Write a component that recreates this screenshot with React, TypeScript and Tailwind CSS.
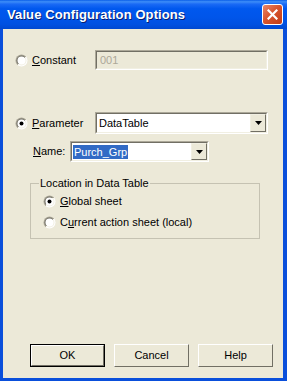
import React from "react";

const Radio = ({ checked }: { checked?: boolean }) => (
  <svg width="13" height="13" viewBox="0 0 13 13" className="shrink-0">
    <defs>
      <linearGradient id="rg" x1="0" y1="0" x2="1" y2="1">
        <stop offset="0" stopColor="#ACA899" />
        <stop offset="0.5" stopColor="#ACA899" />
        <stop offset="0.5" stopColor="#FFFFFF" />
        <stop offset="1" stopColor="#FFFFFF" />
      </linearGradient>
      <linearGradient id="rg2" x1="0" y1="0" x2="1" y2="1">
        <stop offset="0" stopColor="#716F64" />
        <stop offset="0.5" stopColor="#716F64" />
        <stop offset="0.5" stopColor="#F1EFE2" />
        <stop offset="1" stopColor="#F1EFE2" />
      </linearGradient>
    </defs>
    <circle cx="6.5" cy="6.5" r="6" fill="url(#rg)" />
    <circle cx="6.5" cy="6.5" r="5" fill="url(#rg2)" />
    <circle cx="6.5" cy="6.5" r="4" fill="#FFFFFF" />
    {checked && <circle cx="6.5" cy="6.5" r="2" fill="#000000" />}
  </svg>
);

const Sunken = ({ className, children, inner }: { className: string; children?: React.ReactNode; inner: string }) => (
  <div className={`border border-t-[#ACA899] border-l-[#ACA899] border-b-white border-r-white ${className}`}>
    <div className={`h-full border border-t-[#716F64] border-l-[#716F64] border-b-[#F1EFE2] border-r-[#F1EFE2] flex items-center ${inner}`}>
      {children}
    </div>
  </div>
);

const DropBtn = () => (
  <div className="w-[16px] h-full bg-[#ECE9D8] border border-t-[#F1EFE2] border-l-[#F1EFE2] border-b-[#716F64] border-r-[#716F64] flex items-center justify-center shrink-0">
    <svg width="7" height="4" viewBox="0 0 7 4">
      <path d="M0 0H7L3.5 4Z" fill="#000" />
    </svg>
  </div>
);

const Button = ({ label, def }: { label: string; def?: boolean }) => (
  <div className={`w-[75px] h-[23px] ${def ? "border border-black" : ""}`}>
    <div className="h-full border border-t-white border-l-white border-b-[#716F64] border-r-[#716F64] bg-[#ECE9D8] flex items-center justify-center text-black">
      {label}
    </div>
  </div>
);

export default function App() {
  return (
    <div
      className="w-[287px] h-[381px] flex flex-col text-[11px] text-black select-none"
      style={{ fontFamily: '"Liberation Sans", Arial, sans-serif' }}
    >
      <div
        className="h-[29px] flex items-center justify-between pl-[7px] pr-[4px] shrink-0"
        style={{
          background:
            "linear-gradient(to bottom, #0A5EE8 0%, #3D8DF8 6%, #1A6AF5 14%, #0058EE 30%, #0055EA 60%, #0050E0 85%, #0048D0 100%)",
        }}
      >
        <span className="text-white font-bold text-[13px] tracking-[0.1px]" style={{ textShadow: "1px 1px 0 #0A1E6E" }}>
          Value Configuration Options
        </span>
        <div
          className="w-[21px] h-[21px] rounded-[3px] border border-white flex items-center justify-center"
          style={{ background: "linear-gradient(135deg, #E9876A 0%, #D8552F 45%, #C23C16 100%)" }}
        >
          <svg width="11" height="11" viewBox="0 0 11 11">
            <path d="M1.5 1.5L9.5 9.5M9.5 1.5L1.5 9.5" stroke="#fff" strokeWidth="2.2" strokeLinecap="square" />
          </svg>
        </div>
      </div>
      <div className="flex-1 flex flex-col bg-[#ECE9D8] border-l-[3px] border-r-[4px] border-b-[3px] border-[#0A4FDB]">
        <div className="mt-[21px] pl-[12px] flex items-center h-[20px]">
          <div className="w-[80px] flex items-center gap-[4px]">
            <Radio />
            <span>
              <u>C</u>onstant
            </span>
          </div>
          <Sunken className="w-[173px] h-[20px]" inner="bg-[#ECE9D8] pl-[3px]">
            <span className="text-[#ACA899]">001</span>
          </Sunken>
        </div>
        <div className="mt-[42px] pl-[12px] flex items-center h-[22px]">
          <div className="w-[80px] flex items-center gap-[4px]">
            <Radio checked />
            <span>
              <u>P</u>arameter
            </span>
          </div>
          <Sunken className="w-[173px] h-[22px]" inner="bg-white pl-[2px] justify-between">
            <span>DataTable</span>
            <DropBtn />
          </Sunken>
        </div>
        <div className="mt-[7px] pl-[30px] flex items-center h-[21px]">
          <div className="w-[37px]">
            <u>N</u>ame:
          </div>
          <Sunken className="w-[139px] h-[21px]" inner="bg-white pl-[1px] justify-between">
            <span className="bg-[#316AC5] text-white px-[1px] leading-[14px]">Purch_Grp</span>
            <DropBtn />
          </Sunken>
        </div>
        <div className="mt-[21px] ml-[27px] w-[230px] h-[56px] border border-[#C5C2B2] relative flex flex-col pl-[12px] pt-[11px] gap-[8px]">
          <span className="absolute -top-[8px] left-[8px] bg-[#ECE9D8] px-[1px] leading-[14px]">Location in Data Table</span>
          <div className="flex items-center gap-[4px] h-[13px]">
            <Radio checked />
            <span>
              <u>G</u>lobal sheet
            </span>
          </div>
          <div className="flex items-center gap-[4px] h-[13px]">
            <Radio />
            <span>
              C<u>u</u>rrent action sheet (local)
            </span>
          </div>
        </div>
        <div className="flex-1" />
        <div className="flex gap-[9px] pl-[27px] pb-[11px]">
          <Button label="OK" def />
          <Button label="Cancel" />
          <Button label="Help" />
        </div>
      </div>
    </div>
  );
}
